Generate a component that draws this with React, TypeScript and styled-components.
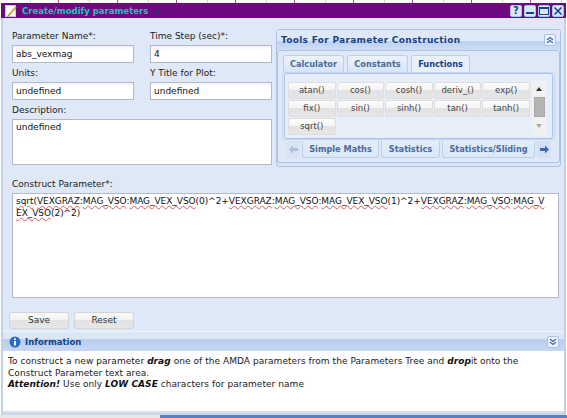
import React from "react";
import styled, { createGlobalStyle } from "styled-components";

const Global = createGlobalStyle`
  html, body { margin: 0; padding: 0; background: #fff; }
  * { box-sizing: border-box; }
`;

const Page = styled.div`
  width: 567px; height: 418px; overflow: hidden; display: flex; flex-direction: column;
  font-family: "DejaVu Sans", Verdana, sans-serif; font-size: 9px; color: #222; background: #fff;
`;
const TopStrip = styled.div`
  height: 3px; flex: none;
  background: repeating-linear-gradient(90deg, #fff 0 30px, #d8d8d8 30px 31px, #fff 31px 58px, #b04a9a 58px 59px);
`;
const Win = styled.div`
  flex: none; height: 412px; margin: 0 1px; display: flex; flex-direction: column;
  background: #dfe8f6; border-left: 2px solid #c0d0ea; border-right: 2px solid #c0d0ea; border-bottom: 2px solid #c9d6ea;
`;
const TitleBar = styled.div`
  height: 15px; flex: none; background: #6d0a7f; margin: 0 -2px; padding: 0 2px 0 4px;
  display: flex; align-items: center; gap: 5px;
`;
const TitleText = styled.div`
  flex: 1; font-size: 8.5px; font-weight: 700; color: #1cc4c0; white-space: nowrap;
`;
const WinBtns = styled.div`display: flex; gap: 2px; align-items: center;`;
const WinBtn = styled.div`
  width: 12px; height: 12px; border-radius: 2px; background: #d9e7f8; border: 1px solid #a9c2e6;
  display: flex; align-items: center; justify-content: center; color: #15428b;
  font-size: 10px; font-weight: 700; line-height: 1;
`;
const Form = styled.div`
  flex: none; height: 313px; padding: 11px 5px 0 9px; display: flex; flex-direction: column;
`;
const TopRow = styled.div`display: flex; height: 138px; flex: none;`;
const Fields = styled.div`
  width: 264px; flex: none; display: grid;
  grid-template-columns: 122px 122px; column-gap: 16px; align-content: start;
`;
const Field = styled.div<{ $wide?: boolean }>`
  grid-column: ${(p) => (p.$wide ? "1 / 3" : "auto")};
  min-height: 37px; display: flex; flex-direction: column;
`;
const Label = styled.div`height: 16px; flex: none; line-height: 14px; color: #222; white-space: nowrap;`;
const Input = styled.div`
  height: 18px; flex: none; background: linear-gradient(#f2f2f2, #fff 4px); border: 1px solid #b5b8c8;
  padding: 0 3px; line-height: 16px; color: #111; white-space: nowrap;
`;
const Area = styled.div<{ $h: number }>`
  height: ${(p) => p.$h}px; flex: none; background: #fff; border: 1px solid #b5b8c8; padding: 2px 3px;
  line-height: 11px; color: #111; overflow: hidden;
`;
const ConstructBlock = styled.div`margin-top: 10px; flex: none; width: 547px;`;
const ConstructArea = styled(Area)`white-space: nowrap; line-height: 12px; padding-top: 1px; letter-spacing: -0.05px;`;
const Wavy = styled.span`text-decoration: underline wavy #e0565a 1px; text-underline-offset: 1px;`;
const Buttons = styled.div`display: flex; gap: 5px; margin: 14px 0 0 -3px; flex: none;`;
const Btn = styled.div`
  width: 60px; height: 17px; border: 1px solid #d4d4d4; border-radius: 3px;
  background: linear-gradient(#fafafa, #f2f2f2 45%, #e3e3e3 50%, #e6e6e6);
  text-align: center; line-height: 15px; color: #333;
`;
const ToolPanel = styled.div`
  width: 285px; height: 138px; flex: none; background: #dae6f6; border: 1px solid #a9c3e8;
  border-radius: 3px; display: flex; flex-direction: column; padding: 0 0 3px;
`;
const ToolHead = styled.div`
  height: 20px; flex: none; display: flex; align-items: center; justify-content: space-between; padding: 0 4px;
  background: linear-gradient(#dfe8f6 0 55%, #bcd1ef 58%, #cfdef4);
`;
const HeadTitle = styled.div<{ $wide?: boolean }>`
  font-weight: 700; color: #15428b; font-size: ${(p) => (p.$wide ? "9px" : "8.5px")};
  letter-spacing: ${(p) => (p.$wide ? "0.3px" : "0")}; white-space: nowrap;
`;
const Collapse = styled.div`
  width: 12px; height: 12px; background: #eef4fc; border: 1px solid #a9c2e6; border-radius: 2px;
  display: flex; align-items: center; justify-content: center;
`;
const ToolBody = styled.div`
  flex: 1; border: 1px solid #a9c3e8; border-radius: 3px; background: #dfe8f6; padding: 4px 4px 3px; display: flex; flex-direction: column;
`;
const Tabs = styled.div`display: flex; gap: 3px; padding-left: 1px; height: 17px; flex: none; position: relative; z-index: 1;`;
const Tab = styled.div<{ $on?: boolean; $w: number }>`
  width: ${(p) => p.$w}px; height: 17px; border: 1px solid #b9cfec; border-bottom: 0; border-radius: 3px 3px 0 0;
  background: ${(p) => (p.$on ? "#e8f0fb" : "linear-gradient(#edf3fc, #d6e4f6)")};
  font-size: 8.2px; font-weight: 700; color: ${(p) => (p.$on ? "#15428b" : "#4a6a9c")}; line-height: 16px; white-space: nowrap; text-align: center;
`;
const TabBody = styled.div`
  height: 68px; flex: none; border: 1px solid #c6d8f0; border-radius: 3px; padding: 0 1px 1px;
`;
const TabInner = styled.div`
  height: 66px; border: 1px solid #a9c3e8; border-radius: 3px; background: #e6eefa; padding: 8px 0 0 3px;
  display: flex; gap: 2px;
`;
const FnGrid = styled.div`
  width: 242px; flex: none; display: grid; grid-template-columns: repeat(5, 47.6px); grid-auto-rows: 17px; gap: 1px;
`;
const FnBtn = styled.div`
  border: 1px solid #dedede; border-radius: 2px; background: linear-gradient(#fbfbfb, #f5f5f5 45%, #e2e2e2 50%, #e6e6e6);
  text-align: center; line-height: 15px; color: #444; font-size: 8.5px;
`;
const Scroll = styled.div`
  width: 14px; height: 54px; flex: none; background: #f1f1f1; display: flex; flex-direction: column; align-items: center; padding-top: 6px; margin-top: -1px;
`;
const ScrollThumb = styled.div`width: 11px; height: 20px; background: #b4b4b4; border: 1px solid #a8a8a8; margin-top: 6px;`;
const UpTri = styled.div`width: 0; height: 0; border: 3px solid transparent; border-top: 0; border-bottom: 4px solid #333;`;
const DownTri = styled.div`width: 0; height: 0; border: 3px solid transparent; border-bottom: 0; border-top: 4px solid #aaa; margin-top: 7px;`;
const BottomTabs = styled.div`display: flex; align-items: center; gap: 2px; margin: 1px 0 0 4px; height: 17px;`;
const Arrow = styled.div<{ $off?: boolean }>`
  width: 14px; height: 17px; background: #d3e1f4; display: flex; align-items: center; justify-content: center; opacity: ${(p) => (p.$off ? 0.5 : 1)};
`;
const BTab = styled(Tab)`
  background: linear-gradient(#e4edf9, #dbe7f7); border: 1px solid #b9cfec; border-top: 0; border-radius: 0 0 3px 3px;
`;
const InfoHead = styled.div`
  height: 20px; flex: none; border-top: 1px solid #eef3fb; display: flex; align-items: center; justify-content: space-between;
  padding: 0 5px 0 6px; background: linear-gradient(#dce7f6 0 35%, #b8cdef 40%, #c6d8f2);
`;
const InfoLeft = styled.div`display: flex; align-items: center; gap: 4px;`;
const InfoText = styled.div`
  flex: 1; background: #fff; padding: 5px 2px 0 5px; line-height: 11.5px; color: #222; font-size: 9px; letter-spacing: 0.05px; border-bottom: 2px solid #d5dfee;
`;
const Bold = styled.b`font-style: italic; color: #111;`;
const BottomStrip = styled.div`flex: 1; background: linear-gradient(90deg, #e8e8e8 0 160px, #5a7fc4 160px);`;

const Pencil = () => (
  <svg width="12" height="12" viewBox="0 0 12 12">
    <rect x="0.5" y="0.5" width="10" height="11" fill="#fff" stroke="#ccc" />
    <path d="M3 10 L10.5 1.5 L11.5 2.5 L4 11 L2.5 11.5Z" fill="#e6b32c" stroke="#a87a18" strokeWidth="0.5" />
  </svg>
);
const Chevrons = ({ up }: { up: boolean }) => (
  <svg width="8" height="8" viewBox="0 0 8 8" fill="none" stroke="#3a6ab0" strokeWidth="1.2">
    {up ? <path d="M1 4 L4 1.5 L7 4 M1 7 L4 4.5 L7 7" /> : <path d="M1 1 L4 3.5 L7 1 M1 4 L4 6.5 L7 4" />}
  </svg>
);
const ArrowIcon = ({ left, color }: { left: boolean; color: string }) => (
  <svg width="9" height="9" viewBox="0 0 9 9" fill={color}>
    {left ? <path d="M0 4.5 L4 0.5 V3 H9 V6 H4 V8.5Z" /> : <path d="M9 4.5 L5 0.5 V3 H0 V6 H5 V8.5Z" />}
  </svg>
);

const fns = ["atan()", "cos()", "cosh()", "deriv_()", "exp()", "fix()", "sin()", "sinh()", "tan()", "tanh()", "sqrt()"];

export default function App() {
  return (
    <Page>
      <Global />
      <TopStrip />
      <Win>
        <TitleBar>
          <Pencil />
          <TitleText>Create/modify parameters</TitleText>
          <WinBtns>
            <WinBtn>?</WinBtn>
            <WinBtn>
              <svg width="8" height="8" viewBox="0 0 8 8"><rect x="0" y="5" width="8" height="2" fill="#15428b" /></svg>
            </WinBtn>
            <WinBtn>
              <svg width="10" height="8" viewBox="0 0 10 8"><rect x="0.5" y="0.5" width="9" height="7" fill="none" stroke="#15428b" /><rect x="0" y="0" width="10" height="2" fill="#15428b" /></svg>
            </WinBtn>
            <WinBtn>
              <svg width="8" height="8" viewBox="0 0 8 8"><path d="M0.5 0.5 L7.5 7.5 M7.5 0.5 L0.5 7.5" stroke="#15428b" strokeWidth="1.5" /></svg>
            </WinBtn>
          </WinBtns>
        </TitleBar>
        <Form>
          <TopRow>
            <Fields>
              <Field><Label>Parameter Name*:</Label><Input>abs_vexmag</Input></Field>
              <Field><Label>Time Step (sec)*:</Label><Input>4</Input></Field>
              <Field><Label>Units:</Label><Input>undefined</Input></Field>
              <Field><Label>Y Title for Plot:</Label><Input>undefined</Input></Field>
              <Field $wide><Label>Description:</Label><Area $h={46}>undefined</Area></Field>
            </Fields>
            <ToolPanel>
              <ToolHead>
                <HeadTitle $wide>Tools For Parameter Construction</HeadTitle>
                <Collapse><Chevrons up /></Collapse>
              </ToolHead>
              <ToolBody>
                <Tabs>
                  <Tab $w={61}>Calculator</Tab>
                  <Tab $w={61}>Constants</Tab>
                  <Tab $on $w={59}>Functions</Tab>
                </Tabs>
                <TabBody>
                  <TabInner>
                    <FnGrid>{fns.map((f) => <FnBtn key={f}>{f}</FnBtn>)}</FnGrid>
                    <Scroll><UpTri /><ScrollThumb /><DownTri /></Scroll>
                  </TabInner>
                </TabBody>
                <BottomTabs>
                  <Arrow $off><ArrowIcon left color="#7a9ac8" /></Arrow>
                  <BTab $w={77}>Simple Maths</BTab>
                  <BTab $w={59}>Statistics</BTab>
                  <BTab $w={93}>Statistics/Sliding</BTab>
                  <Arrow><ArrowIcon left={false} color="#3a6ab0" /></Arrow>
                </BottomTabs>
              </ToolBody>
            </ToolPanel>
          </TopRow>
          <ConstructBlock>
            <Label>Construct Parameter*:</Label>
            <ConstructArea $h={105}>
              <Wavy>sqrt</Wavy>(<Wavy>VEXGRAZ</Wavy>:<Wavy>MAG_VSO</Wavy>:<Wavy>MAG_VEX_VSO</Wavy>(0)^2+<Wavy>VEXGRAZ</Wavy>:<Wavy>MAG_VSO</Wavy>:<Wavy>MAG_VEX_VSO</Wavy>(1)^2+<Wavy>VEXGRAZ</Wavy>:<Wavy>MAG_VSO</Wavy>:<Wavy>MAG_V</Wavy><br />
              <Wavy>EX_VSO</Wavy>(2)^2)
            </ConstructArea>
          </ConstructBlock>
          <Buttons>
            <Btn>Save</Btn>
            <Btn>Reset</Btn>
          </Buttons>
        </Form>
        <InfoHead>
          <InfoLeft>
            <svg width="12" height="12" viewBox="0 0 12 12">
              <circle cx="6" cy="6" r="5.5" fill="#2a6cc0" />
              <rect x="5" y="5" width="2" height="4.5" fill="#fff" />
              <rect x="5" y="2.5" width="2" height="1.6" fill="#fff" />
            </svg>
            <HeadTitle>Information</HeadTitle>
          </InfoLeft>
          <Collapse><Chevrons up={false} /></Collapse>
        </InfoHead>
        <InfoText>
          To construct a new parameter <Bold>drag</Bold> one of the AMDA parameters from the Parameters Tree and <Bold>drop</Bold>it onto the<br />
          Construct Parameter text area.<br />
          <Bold>Attention!</Bold> Use only <Bold>LOW CASE</Bold> characters for parameter name
        </InfoText>
      </Win>
      <BottomStrip />
    </Page>
  );
}
